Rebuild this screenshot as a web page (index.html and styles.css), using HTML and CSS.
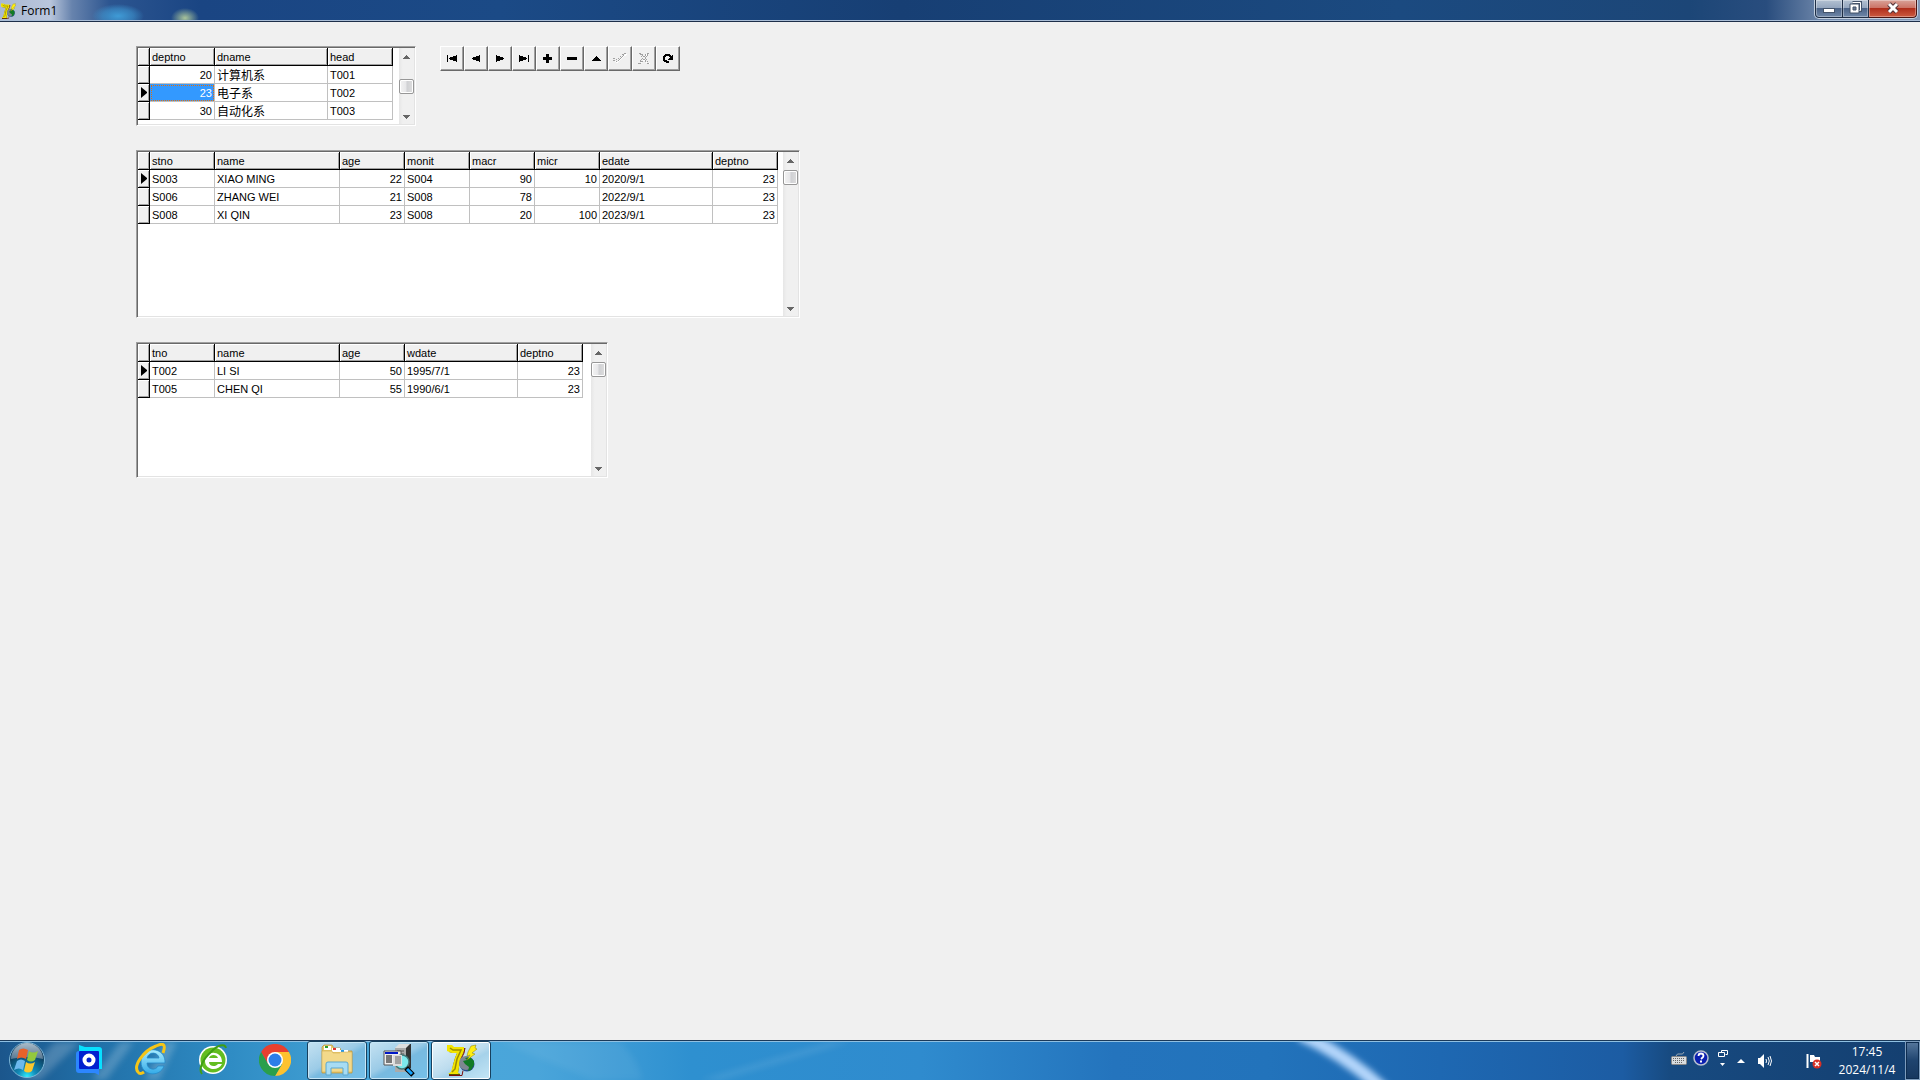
FILE: index.html
```
<!DOCTYPE html>
<html lang="zh-CN">
<head>
<meta charset="utf-8">
<title>Form1</title>
<link rel="stylesheet" href="styles.css">
</head>
<body>
<svg width="0" height="0" class="defs" aria-hidden="true">
  <defs>
    <symbol id="seven" viewBox="0 0 32 32">
      <path d="M4 3h5l2 1h9l-1 4-3 6-2 9-1 6 2 1v2H4v-2l3-2 1-7 2-7 2-5H8L4 8z" fill="#5a5000"/>
      <path d="M2 1h5l2 2h10v4l-3 7-2 9-1 6 2 1H3l3-2 2-7 2-7 2-5H7L2 7z" fill="#f2e400"/>
      <path d="M5 4l3 2h8l-4 9-2 10-3 3" fill="none" stroke="#9a8c00" stroke-width="1.500"/>
      <path d="M4 31.500h13l1-5M20 4l-1 5-3 6" stroke="#7a1010" fill="none"/>
      <circle cx="22" cy="20" r="7.500" fill="#274b8c"/>
      <circle cx="21" cy="19" r="7" fill="#7d8790"/>
      <path d="M20 14l5-1 4 4v4l-3 5-3 1 1-4-4-3-2-3 4-1z" fill="#117a25"/>
      <path d="M31 1l-5 1-3 6-1 4 3-1-3 5 8-6-3-1 5-4-2-1z" fill="#ffee10" stroke="#8a7c00" stroke-width=".5"/>
    </symbol>
    <symbol id="arrow-up" viewBox="0 0 7 4"><path d="M3 0h1v1h1v1h1v1h1v1H0V3h1V2h1V1h1z" fill="#666"/></symbol>
    <symbol id="arrow-down" viewBox="0 0 7 4"><path d="M0 0h7v1H6v1H5v1H4v1H3V3H2V2H1V1H0z" fill="#666"/></symbol>
    <symbol id="current" viewBox="0 0 6 11"><path d="M0 0l6 5v1l-6 5z" fill="#000"/></symbol>
    <filter id="soft" x="-20%" y="-50%" width="140%" height="200%"><feGaussianBlur stdDeviation="3"/></filter>
  </defs>
</svg>

<div class="desktop">
  <header class="titlebar">
    <svg class="title-icon" viewBox="0 0 32 32" aria-hidden="true"><use href="#seven"/></svg>
    <h1 class="title">Form1</h1>
    <div class="caption">
      <button class="cap cap-min" aria-label="Minimize"><svg width="12" height="6"><rect x=".5" y=".5" width="11" height="4" fill="#fff" stroke="#44546b"/></svg></button>
      <button class="cap cap-max" aria-label="Restore"><svg width="13" height="13"><path d="M3.500 1.500h8v8h-2" fill="none" stroke="#44546b" stroke-width="3"/><path d="M3.500 1.500h8v8h-2" fill="none" stroke="#fff"/><path d="M1 3h9v9H1z" fill="#fff" stroke="#44546b"/><path d="M4 6h3v3H4z" fill="#6b7d96" stroke="#44546b"/></svg></button>
      <button class="cap cap-close" aria-label="Close"><svg width="14" height="12"><path d="M3 2l8 8M11 2l-8 8" stroke="#53343a" stroke-width="5"/><path d="M3 2l8 8M11 2l-8 8" stroke="#fff" stroke-width="3"/></svg></button>
    </div>
  </header>

  <main class="form">
    <div class="row">
      <section class="grid grid-dept">
        <table>
          <colgroup><col class="c-ind"><col class="c-s"><col class="c-m"><col class="c-s"></colgroup>
          <thead><tr><td class="ind"></td><th>deptno</th><th>dname</th><th>head</th></tr></thead>
          <tbody>
            <tr><td class="ind"></td><td class="num">20</td><td class="cjk">计算机系</td><td>T001</td></tr>
            <tr><td class="ind"><svg width="6" height="11"><use href="#current"/></svg></td><td class="num selected">23</td><td class="cjk">电子系</td><td>T002</td></tr>
            <tr><td class="ind"></td><td class="num">30</td><td class="cjk">自动化系</td><td>T003</td></tr>
          </tbody>
        </table>
        <div class="scroll">
          <button class="arrow" aria-label="Scroll up"><svg width="7" height="4"><use href="#arrow-up"/></svg></button>
          <div class="track track-mid"><div class="thumb"></div></div>
          <button class="arrow arrow-end" aria-label="Scroll down"><svg width="7" height="4"><use href="#arrow-down"/></svg></button>
        </div>
      </section>

      <nav class="navigator" aria-label="Records">
        <button aria-label="First"><svg width="24" height="24"><path d="M7 9h1v7H7zM17 9v7l-8-3v-1z"/></svg></button>
        <button aria-label="Previous"><svg width="24" height="24"><path d="M16 9v7l-8-3v-1z"/></svg></button>
        <button aria-label="Next"><svg width="24" height="24"><path d="M8 9v7l8-3v-1z"/></svg></button>
        <button aria-label="Last"><svg width="24" height="24"><path d="M7 9v7l8-3v-1zM16 9h1v7h-1z"/></svg></button>
        <button aria-label="Insert"><svg width="24" height="24"><path d="M10 8h3v3h3v3h-3v3h-3v-3H7v-3h3z"/></svg></button>
        <button aria-label="Delete"><svg width="24" height="24"><path d="M7 11h10v3H7z"/></svg></button>
        <button aria-label="Edit"><svg width="24" height="24"><path d="M12 10l5 5H7z"/></svg></button>
        <button aria-label="Post" disabled><svg width="24" height="24"><path d="M6 14l3 3 2-2 4-4 4-3" fill="none" stroke="#fff"/><path d="M5 13l2-1 2 2 5-5 4-2M5 14l3 2 3-2 4-4 3-3" fill="none" stroke="#a0a0a0" stroke-dasharray="2 1"/></svg></button>
        <button aria-label="Cancel" disabled><svg width="24" height="24"><path d="M9 8l3 3 4-3M9 17l3-3 3 3h3" fill="none" stroke="#fff"/><path d="M7 7h2l3 4 3-4h2l-4 5 4 5h-2l-3-4-3 4H7l4-5z" fill="none" stroke="#a0a0a0" stroke-dasharray="2 1"/></svg></button>
        <button aria-label="Refresh"><svg width="24" height="24"><path d="M13 16h-2l-3-2v-3l2-2h3l2 2" fill="none" stroke="#000" stroke-width="2"/><path d="M17 8v6h-5z"/></svg></button>
      </nav>
    </div>

    <section class="grid grid-student">
      <table>
        <colgroup><col class="c-ind"><col class="c-s"><col class="c-l"><col class="c-s"><col class="c-s"><col class="c-s"><col class="c-s"><col class="c-m"><col class="c-s"></colgroup>
        <thead><tr><td class="ind"></td><th>stno</th><th>name</th><th>age</th><th>monit</th><th>macr</th><th>micr</th><th>edate</th><th>deptno</th></tr></thead>
        <tbody>
          <tr><td class="ind"><svg width="6" height="11"><use href="#current"/></svg></td><td>S003</td><td>XIAO MING</td><td class="num">22</td><td>S004</td><td class="num">90</td><td class="num">10</td><td>2020/9/1</td><td class="num">23</td></tr>
          <tr><td class="ind"></td><td>S006</td><td>ZHANG WEI</td><td class="num">21</td><td>S008</td><td class="num">78</td><td></td><td>2022/9/1</td><td class="num">23</td></tr>
          <tr><td class="ind"></td><td>S008</td><td>XI QIN</td><td class="num">23</td><td>S008</td><td class="num">20</td><td class="num">100</td><td>2023/9/1</td><td class="num">23</td></tr>
        </tbody>
      </table>
      <div class="scroll">
        <button class="arrow" aria-label="Scroll up"><svg width="7" height="4"><use href="#arrow-up"/></svg></button>
        <div class="track"><div class="thumb"></div></div>
        <button class="arrow arrow-end" aria-label="Scroll down"><svg width="7" height="4"><use href="#arrow-down"/></svg></button>
      </div>
    </section>

    <section class="grid grid-teacher">
      <table>
        <colgroup><col class="c-ind"><col class="c-s"><col class="c-l"><col class="c-s"><col class="c-m"><col class="c-s"></colgroup>
        <thead><tr><td class="ind"></td><th>tno</th><th>name</th><th>age</th><th>wdate</th><th>deptno</th></tr></thead>
        <tbody>
          <tr><td class="ind"><svg width="6" height="11"><use href="#current"/></svg></td><td>T002</td><td>LI SI</td><td class="num">50</td><td>1995/7/1</td><td class="num">23</td></tr>
          <tr><td class="ind"></td><td>T005</td><td>CHEN QI</td><td class="num">55</td><td>1990/6/1</td><td class="num">23</td></tr>
        </tbody>
      </table>
      <div class="scroll">
        <button class="arrow" aria-label="Scroll up"><svg width="7" height="4"><use href="#arrow-up"/></svg></button>
        <div class="track"><div class="thumb"></div></div>
        <button class="arrow arrow-end" aria-label="Scroll down"><svg width="7" height="4"><use href="#arrow-down"/></svg></button>
      </div>
    </section>
  </main>

  <footer class="taskbar">
    <svg class="streaks" viewBox="0 0 1920 38" preserveAspectRatio="none" aria-hidden="true">
      <path d="M1300 -8Q1345 12 1384 48" fill="none" stroke="#b4d6fb" stroke-width="13" filter="url(#soft)"/>
      <g filter="url(#soft)" fill="#fff">
        <path d="M620 0q20 20 22 38h-50L500 0z" opacity=".06"/>
        <path d="M830 0h20L720 38h-20z" opacity=".1"/>
        <path d="M55 0h25L40 38H20zM120 0h14L106 38H92zM165 0h12l-18 38h-14z" opacity=".2"/>
      </g>
    </svg>
    <button class="start" aria-label="Start">
      <svg width="38" height="38" viewBox="0 0 38 38">
        <defs>
          <radialGradient id="orb" cx=".5" cy=".98" r=".75"><stop offset="0" stop-color="#2ff0ff"/><stop offset=".35" stop-color="#128bb8"/><stop offset="1" stop-color="#0b3354"/></radialGradient>
          <linearGradient id="gloss" x2="0" y2="1"><stop offset="0" stop-color="#dfe9f0"/><stop offset="1" stop-color="#6f8ba3"/></linearGradient>
        </defs>
        <circle cx="19" cy="19" r="17.500" fill="url(#orb)" stroke="#7fb7d8"/>
        <path d="M3 18a16 16 0 0 1 32 0q-16-4-32 0z" fill="url(#gloss)" opacity=".75"/>
        <path d="M11 9q4-3 9 0l-2 9q-5-3-9 0z" fill="#e8622a"/>
        <path d="M21 10q4 3 9 0l-3 9q-4 3-8 0z" fill="#93c83d"/>
        <path d="M9 20q4-3 8 0l-2 9q-4-3-9 0z" fill="#6cb9ee"/>
        <path d="M18 21q4 3 9 0l-3 9q-4 3-8 0z" fill="#fbc72e"/>
      </svg>
    </button>
    <button class="pin" aria-label="Recorder">
      <svg width="28" height="32" viewBox="0 0 28 32"><path d="M4 1l6 2h14q3 0 3 3v19h-8L4 12z" fill="#08e0ff"/><path d="M1 10q0-3 3-3h4v17h16v7l-4-2H4q-3 0-3-3z" fill="#2c86ff"/><rect x="4" y="7" width="20" height="18" rx="1" fill="#0220cf"/><circle cx="14" cy="16" r="4.500" fill="none" stroke="#fff" stroke-width="4"/></svg>
    </button>
    <button class="pin" aria-label="Internet Explorer">
      <svg width="32" height="34" viewBox="0 0 32 34"><defs><linearGradient id="ie" x2="0" y2="1"><stop offset="0" stop-color="#a8ecff"/><stop offset="1" stop-color="#33aae8"/></linearGradient></defs><path d="M30 20H12c0 7 9 8 11 3h6c-4 12-23 10-23-4C6 2 31 3 30 20zM12 15h12c-1-6-10-7-12 0z" fill="url(#ie)" fill-rule="evenodd" stroke="#2489c8" stroke-width=".8"/><path d="M28 10c3-8 1-11-7-7C8 8-2 23 3 29q2 3 6 0" fill="none" stroke="#f5c518" stroke-width="3"/></svg>
    </button>
    <button class="pin" aria-label="Browser">
      <svg width="30" height="34" viewBox="0 0 30 34"><circle cx="15" cy="17" r="14" fill="#fff"/><circle cx="15" cy="17" r="12.500" fill="#63bd20"/><path d="M24 19H11c0 5 7 5 9 2h4c-4 8-17 6-17-3 0-11 17-11 17 1zM11 15h9c-1-4-8-4-9 0z" fill="#fff" fill-rule="evenodd"/><path d="M28 5c-1-5-9-3-15 4C5 16 0 26 4 31" fill="none" stroke="#3f9e14" stroke-width="2"/></svg>
    </button>
    <button class="pin" aria-label="Chrome">
      <svg width="32" height="32" viewBox="0 0 32 32"><path d="M2.100 8A16 16 0 0 1 29.900 8H16l-7 12z" fill="#e8402f"/><path d="M29.900 8A16 16 0 0 1 16 32l7-12-7-12z" fill="#fdc22f"/><path d="M2.100 8A16 16 0 0 0 16 32l7-12H9z" fill="#2a9f4b"/><circle cx="16" cy="16" r="8" fill="#fff"/><circle cx="16" cy="16" r="6.500" fill="#2c7de9"/></svg>
    </button>
    <div class="tasks">
      <button class="task" aria-label="Explorer">
        <svg width="34" height="32" viewBox="0 0 34 32"><path d="M2 3l2-2h8l2 3h6l1 3h11v22H2z" fill="#e8c86a" stroke="#b89436" stroke-width=".7"/><path d="M4 2h7v4H4zM12 4h8v4h-8zM20 6h8v4h-8z" fill="#fff"/><path d="M5 2h3v2H5z" fill="#2c9e2c"/><path d="M13 4h3v2h-3z" fill="#d33"/><path d="M21 6h3v2h-3z" fill="#29e"/><path d="M2 7h10l1 2h7l1-1h11v20H2z" fill="#f3d98a" stroke="#c9a548" stroke-width=".5"/><path d="M6 31V20q0-2 2-2h18q2 0 2 2v11h-5v-7H11v7z" fill="#a7dcf3" stroke="#5ba7cf"/></svg>
      </button>
      <button class="task" aria-label="Search server">
        <svg width="32" height="33" viewBox="0 0 32 33"><path d="M13 4l4-4h11v24l-4 4H13z" fill="#333"/><path d="M12 4l4-4h11l-4 4z" fill="#ddd"/><path d="M12 4h11v24H12z" fill="#aaa"/><path d="M14 7h7M14 10h7" stroke="#555"/><path d="M1 7h17v14H1z" fill="#eee" stroke="#555"/><path d="M2 8h13v2H2z" fill="#0018c8"/><path d="M3 12h6M3 14h6M3 16h6M3 18h6" stroke="#000"/><circle cx="19" cy="18" r="7" fill="#7de8ec" stroke="#477" stroke-width="1.500"/><path d="M10 11h9v11h-9z" fill="#ddd"/><path d="M12 13h6M12 15h6M12 17h6M12 19h6" stroke="#666"/><path d="M23 24l7 7" stroke="#000" stroke-width="5"/><path d="M24 25l5 5" stroke="#15a5ff" stroke-width="3"/></svg>
      </button>
      <button class="task task-active" aria-label="Form1">
        <svg width="32" height="32"><use href="#seven"/></svg>
      </button>
    </div>
    <div class="tray">
      <button class="tb tb-key" aria-label="Keyboard"><svg width="16" height="14" viewBox="0 0 16 14"><path d="M5 5q1-3 4-2t4-2" fill="none" stroke="#9aa8b5"/><rect x=".5" y="5.500" width="15" height="8" rx="1" fill="#d8dcdf" stroke="#888"/><path d="M2 7.500h12M2 9.500h12M4 11.500h8" stroke="#666" stroke-dasharray="1 1"/></svg></button>
      <button class="tb tb-help" aria-label="Help"><svg width="16" height="16" viewBox="0 0 16 16"><circle cx="8" cy="8" r="7" fill="#0a1fb0" stroke="#b8bfd0" stroke-width="1.500"/><path d="M5.500 6q0-2.500 2.500-2.500T10.500 6Q10.500 7 8 9" fill="none" stroke="#fff" stroke-width="1.800"/><rect x="7" y="10.500" width="2" height="2" fill="#fff"/></svg></button>
      <button class="tb tb-lang" aria-label="Language bar"><svg width="10" height="18" viewBox="0 0 10 18"><path d="M3.500 3.500v-2h6v4h-2M.5 3.500h6v4h-6z" fill="none" stroke="#fff"/><path d="M2 14h5l-2.500 3z" fill="#fff"/></svg></button>
      <button class="tb tb-more" aria-label="Show hidden icons"><svg width="8" height="4"><path d="M4 0l4 4H0z" fill="#fff"/></svg></button>
      <button class="tb tb-sound" aria-label="Volume"><svg width="16" height="14" viewBox="0 0 16 14"><path d="M1 4h2v6H1zM3 4l4-4v14l-4-4z" fill="#fff"/><path d="M9 5q1 2 0 4M11 3q2.500 4 0 8M13 2q3 5 0 10" fill="none" stroke="#fff"/></svg></button>
      <button class="tb tb-flag" aria-label="Action center"><svg width="16" height="16" viewBox="0 0 16 16"><path d="M1.500 1v14" stroke="#fff" stroke-width="2"/><path d="M4 2h4l1 2h5v6H8L7 9H4z" fill="#fff"/><circle cx="11" cy="11" r="4.500" fill="#d83025"/><path d="M9 9l4 4M13 9l-4 4" stroke="#fff" stroke-width="1.500"/></svg></button>
      <button class="clock"><span>17:45</span><span>2024/11/4</span></button>
      <button class="peek" aria-label="Show desktop"></button>
    </div>
  </footer>
</div>
</body>
</html>
```

FILE: styles.css
```
* { box-sizing: border-box; }

body {
  margin: 0;
  background: #f0f0f0;
  color: #000;
  font: 11px/16px "Liberation Sans", Arial, "Noto Sans CJK SC", sans-serif;
}

button {
  margin: 0;
  padding: 0;
  border: 0;
  background: none;
  color: inherit;
  font: inherit;
}

svg { display: block; flex: none; }
.defs { position: absolute; }

.desktop {
  display: flex;
  flex-direction: column;
  min-height: 100vh;
}

/* Title bar */
.titlebar {
  display: flex;
  align-items: flex-start;
  height: 22px;
  border-bottom: 1px solid #1d2f4a;
  box-shadow: inset 0 -1px #a9bdd6;
  background:
    radial-gradient(ellipse 14px 10px at 185px 18px, #a9c49a, transparent),
    radial-gradient(ellipse 26px 12px at 118px 16px, #3f9bd6, #3f9bd688 60%, transparent),
    linear-gradient(90deg, #a9b8d2 0, #b9c6dc 50px, #6783ad 72px, #2c5590 110px, #1a4583 200px, #1b4a86 500px, #173f74 900px, #1b4a80 1400px, #1c4677 88%, #294d7e 92%, #7088ab 95%, #8298b6 100%);
}

.title-icon { width: 16px; height: 16px; margin-top: 3px; }

.title {
  flex: 1;
  margin: 2px 0 0 5px;
  font: 12px/17px "Open Sans", "Noto Sans", sans-serif;
}

.caption {
  display: flex;
  height: 19px;
  margin-right: 2px;
  border: 1px solid #c3d0e0;
  border-top: 0;
  border-radius: 0 0 5px 5px;
  overflow: hidden;
}

.cap {
  display: flex;
  align-items: center;
  justify-content: center;
  width: 28px;
  padding-bottom: 2px;
  border: 1px solid #1f2e45;
  border-top: 0;
  box-shadow: inset 0 0 0 1px #ffffff55;
  background: linear-gradient(#b3c1d2 0, #93a5bd 48%, #4c6488 50%, #6f87a8 100%);
}
.cap-min { border-radius: 0 0 0 4px; padding: 4px 0 0; }
.cap-max { border-left: 0; width: 26px; }
.cap-close {
  width: 48px;
  border-color: #4a1512;
  border-left: 0;
  border-radius: 0 0 4px 0;
  background: linear-gradient(#d9a399 0, #cb7163 48%, #b02f1c 50%, #cc5a40 100%);
}

/* Form */
.form {
  flex: 1;
  display: flex;
  flex-direction: column;
  align-items: flex-start;
  gap: 24px;
  padding: 24px 24px 24px 136px;
}

.row { display: flex; align-items: flex-start; gap: 24px; }

.grid {
  display: flex;
  border: 1px solid;
  border-color: #a0a0a0 #fff #fff #a0a0a0;
  box-shadow: inset 1px 1px #696969, inset -1px -1px #e3e3e3;
  padding: 1px;
  background: #fff;
}
.grid-dept { width: 280px; min-height: 80px; }
.grid-student { width: 664px; min-height: 168px; }
.grid-teacher { width: 472px; min-height: 136px; }

table {
  table-layout: fixed;
  width: 0;
  align-self: flex-start;
  border-collapse: separate;
  border-spacing: 0;
}

.c-ind { width: 12px; }
.c-s { width: 65px; }
.c-m { width: 113px; }
.c-l { width: 125px; }

th, td {
  height: 18px;
  padding: 1px 2px 0;
  border: solid #c0c0c0;
  border-width: 0 1px 1px 0;
  font-weight: normal;
  text-align: left;
  white-space: nowrap;
}

th, .ind {
  border-color: #000;
  background: #f0f0f0;
  box-shadow: inset 1px 1px #fff, inset -1px -1px #a0a0a0;
}
.ind { padding: 0 3px; }
.num { padding-right: 2px; text-align: right; }
.cjk {
  padding-top: 0;
  font-size: 12px;
  font-family: "Noto Sans CJK SC", sans-serif;
}

.selected {
  background: #3399ff;
  color: #fff;
  outline: 1px dotted #e07010;
  outline-offset: -2px;
}

/* Scroll bar */
.scroll {
  display: flex;
  flex-direction: column;
  width: 15px;
  margin-left: auto;
  background: linear-gradient(90deg, #e6e6e6, #f0f0f0 25%, #f0f0f0);
}
.arrow {
  display: flex;
  align-items: center;
  justify-content: center;
  height: 18px;
}
.arrow-end { padding-top: 3px; }
.track { flex: 1; }
.track-mid { padding-top: 13px; }
.thumb {
  height: 15px;
  border: 1px solid #979797;
  border-radius: 2px;
  box-shadow: inset 0 0 0 1px #fff;
  background: linear-gradient(90deg, #f3f3f3, #e6e6e8 48%, #cfd0d3 52%, #dedede);
}

/* Record navigator */
.navigator { display: flex; }
.navigator button {
  display: flex;
  width: 24px;
  height: 25px;
  border: 1px solid;
  border-color: #fff #696969 #696969 #fff;
  box-shadow: inset -1px -1px #a0a0a0;
}
.navigator svg { margin: -1px; shape-rendering: crispEdges; }

/* Taskbar */
.taskbar {
  position: relative;
  display: flex;
  height: 40px;
  border-top: 1px solid #1b3a5a;
  box-shadow: inset 0 1px #8fc0e2;
  background: linear-gradient(90deg, #1b568c 0, #2170a8 5%, #2f8cc4 12%, #49a8da 20%, #4aa5da 28%, #2e90d0 36%, #2f8bce 48%, #2474bd 58%, #2273bb 66%, #1e68b2 75%, #1c5ca3 84.500%, #174a80 87%, #143f70 100%);
}
.streaks {
  position: absolute;
  inset: 1px 0 0;
  width: 100%;
  height: 38px;
}
.taskbar > button, .tasks, .tray { position: relative; }
.start, .pin, .task, .tb, .peek {
  display: flex;
  align-items: center;
  justify-content: center;
}
.start, .pin { padding-bottom: 1px; }
.start { width: 54px; margin-right: 4px; }
.pin { width: 62px; }

.tasks { display: flex; gap: 2px; margin-left: 1px; }
.task {
  width: 60px;
  padding-bottom: 1px;
  border: 1px solid #17405e;
  border-radius: 3px;
  box-shadow: inset 0 0 0 1px #c6e6f7;
  background: linear-gradient(150deg, #c5e2f2 0, #9bcbe7 45%, #78bae0 55%, #75c0e8 100%);
}
.task-active {
  box-shadow: inset 0 0 0 1px #fff;
  background: linear-gradient(150deg, #e6f4fb 0, #bcdcee 50%, #a6d2ea 60%, #c4e6f6 100%);
}

.tray {
  display: flex;
  margin-left: auto;
  color: #fff;
}
.tb { width: 22px; }
.tb-key, .tb-help { padding-bottom: 6px; }
.tb-lang { padding-bottom: 6px; }
.tb-more { width: 14px; }
.tb-sound { width: 34px; }
.tb-flag { width: 30px; margin-left: 17px; }
.clock {
  display: flex;
  flex-direction: column;
  width: 76px;
  padding-top: 2px;
  align-items: center;
  font: 12px/18px "Open Sans", "Noto Sans", sans-serif;
}
.peek {
  width: 15px;
  border: 1px solid #7d9cbd;
  box-shadow: inset 0 0 0 1px #0d2c50;
  background: linear-gradient(#56779d, #1f446f 50%, #16375f);
}
```
